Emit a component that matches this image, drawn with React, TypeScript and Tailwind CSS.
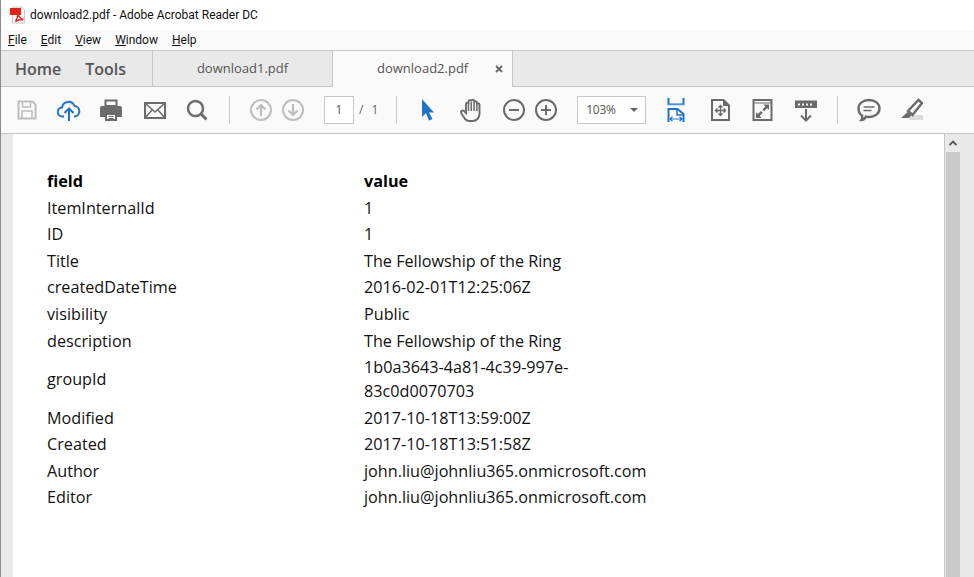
const rows: [string, string[]][] = [
  ['ItemInternalId', ['1']],
  ['ID', ['1']],
  ['Title', ['The Fellowship of the Ring']],
  ['createdDateTime', ['2016-02-01T12:25:06Z']],
  ['visibility', ['Public']],
  ['description', ['The Fellowship of the Ring']],
  ['groupId', ['1b0a3643-4a81-4c39-997e-', '83c0d0070703']],
  ['Modified', ['2017-10-18T13:59:00Z']],
  ['Created', ['2017-10-18T13:51:58Z']],
  ['Author', ['john.liu@johnliu365.onmicrosoft.com']],
  ['Editor', ['john.liu@johnliu365.onmicrosoft.com']],
];

const Sep = ({ className }: { className: string }) => <div className={`w-px h-[28px] bg-[#c8c8c8] shrink-0 ${className}`} />;

const Icon = ({ className, w = 24, children }: { className: string; w?: number; children: React.ReactNode }) => (
  <svg width={w} height="24" viewBox={`0 0 ${w} 24`} fill="none" className={`shrink-0 ${className}`}>
    {children}
  </svg>
);

const GRAY = '#6b6b6b';
const LIGHT = '#bdbdbd';
const BLUE = '#1f74c9';

export default function App() {
  return (
    <div className="w-[974px] h-[577px] overflow-hidden flex flex-col bg-white border-l border-[#8c8c8c] font-['Open_Sans','Noto_Sans',sans-serif] text-[#222]">
      <div className="h-[30px] flex items-center shrink-0 bg-white">
        <svg width="18" height="18" viewBox="0 0 18 18" className="ml-[8px] mt-[-1px]">
          <path d="M3.5 1h9l3 3v13h-12z" fill="#f4f4f4" stroke="#c9c9c9" />
          <path d="M1 2h11v7H1z" fill="#e2231a" />
          <path d="M9 8c1 3 3 5 5.5 5.5-2.5 0-6 .5-8 2 1-2 2.500-5 2.500-7.500z" fill="none" stroke="#e2231a" strokeWidth="1.300" />
        </svg>
        <span className="ml-[3px] text-[12px] font-['Roboto',sans-serif] text-[#111]">download2.pdf - Adobe Acrobat Reader DC</span>
      </div>
      <div className="h-[20px] shrink-0 flex items-center bg-[#fafafa] pl-[7px] gap-[14px] text-[12px] font-['Roboto',sans-serif] text-[#111]">
        <span><u>F</u>ile</span>
        <span><u>E</u>dit</span>
        <span><u>V</u>iew</span>
        <span><u>W</u>indow</span>
        <span><u>H</u>elp</span>
      </div>
      <div className="h-[37px] shrink-0 flex bg-[#e9e9e9] border-y border-[#c6c6c6] text-[#555]">
        <div className="w-[152px] flex items-center pl-[14px] gap-[24px] text-[16px] font-semibold border-r border-[#c6c6c6]">
          <span>Home</span>
          <span>Tools</span>
        </div>
        <div className="w-[180px] flex items-center justify-center text-[13px] border-r border-[#c6c6c6]">download1.pdf</div>
        <div className="w-[180px] h-[36px] flex items-center bg-[#fafafa] border-r border-[#c6c6c6] text-[13px]">
          <span className="ml-[44px]">download2.pdf</span>
          <svg width="8" height="8" viewBox="0 0 8 8" className="ml-[27px]">
            <path d="M1 1l6 6M7 1L1 7" stroke="#666" strokeWidth="1.800" />
          </svg>
        </div>
      </div>
      <div className="h-[47px] shrink-0 flex items-center bg-[#fafafa] border-b border-[#c6c6c6] text-[#555]">
        <Icon className="ml-[14px]">
          <path d="M3.500 3.500h14l3 3v14h-17z" stroke={LIGHT} strokeWidth="2" />
          <path d="M7.500 4v5h8V4M7 20v-7h10v7" stroke={LIGHT} strokeWidth="1.500" />
        </Icon>
        <Icon className="ml-[18px]">
          <path d="M7 18.500H5.500a4.500 4.500 0 0 1-.5-9 6.500 6.500 0 0 1 12.500-1.500 5.300 5.300 0 0 1 .5 10.500H17" stroke={BLUE} strokeWidth="2" />
          <path d="M12 23V11M7.500 15l4.500-4.500 4.500 4.500" stroke={BLUE} strokeWidth="2" />
        </Icon>
        <Icon className="ml-[18px]">
          <path d="M6.500 2.500h11V8h-11z" stroke={GRAY} strokeWidth="2" />
          <path d="M3 8h18a2 2 0 0 1 2 2v9h-5v-4H6v4H1v-9a2 2 0 0 1 2-2z" fill={GRAY} />
          <path d="M7 16h10v6H7z" fill="none" stroke={GRAY} strokeWidth="2" />
          <path d="M9.500 18.500h5M9.500 20.500h5" stroke={GRAY} />
        </Icon>
        <Icon className="ml-[20px]">
          <path d="M2 5h20v15H2z" stroke={GRAY} strokeWidth="2" />
          <path d="M2 5l10 9 10-9M2 20l7.500-8.500M22 20l-7.500-8.500" stroke={GRAY} strokeWidth="1.500" />
        </Icon>
        <Icon className="ml-[18px]">
          <circle cx="10.500" cy="10.500" r="7.500" stroke={GRAY} strokeWidth="2.400" />
          <path d="M15.500 15.500l6 6" stroke={GRAY} strokeWidth="3" />
        </Icon>
        <Sep className="ml-[20px]" />
        <Icon className="ml-[19px]">
          <circle cx="12" cy="12" r="10" stroke={LIGHT} strokeWidth="2" />
          <path d="M12 18V7M7.500 11.500L12 7l4.500 4.500" stroke={LIGHT} strokeWidth="2.200" />
        </Icon>
        <Icon className="ml-[8px]">
          <circle cx="12" cy="12" r="10" stroke={LIGHT} strokeWidth="2" />
          <path d="M12 6v11M7.500 12.500L12 17l4.500-4.500" stroke={LIGHT} strokeWidth="2.200" />
        </Icon>
        <div className="ml-[19px] w-[30px] h-[28px] bg-white border border-[#c8c8c8] flex items-center justify-center text-[12px]">1</div>
        <span className="ml-[5px] text-[12px] text-[#666]">/</span>
        <span className="ml-[8px] text-[12px] text-[#666]">1</span>
        <Sep className="ml-[18px]" />
        <Icon className="ml-[19px]">
          <path d="M6 1l12 13.500h-5l3.500 6.500-3.500 1.500-3-7.500L6 19z" fill={BLUE} />
        </Icon>
        <Icon className="ml-[20px]">
          <path d="M5 21c-1-2-4-5-4-7 0-1.500 1.500-2 3-1l2 2V6c0-1.800 2.500-1.800 2.500 0V3.500c0-1.800 2.800-1.800 2.800 0V3c0-1.800 2.800-1.800 2.800 0v1.500c0-1.800 2.800-1.800 2.800 0v2c0-1.500 2.600-1.500 2.600 0V16c0 4-3 7-7 7H9c-2 0-3-1-4-2z" stroke={GRAY} strokeWidth="1.900" />
          <path d="M8.500 6v7M11.300 4v9M14.100 4v9M16.900 6v7" stroke={GRAY} strokeWidth="1.500" />
        </Icon>
        <Icon className="ml-[18px]">
          <circle cx="12" cy="12" r="10" stroke={GRAY} strokeWidth="2" />
          <path d="M7 12h10" stroke={GRAY} strokeWidth="2" />
        </Icon>
        <Icon className="ml-[8px]">
          <circle cx="12" cy="12" r="10" stroke={GRAY} strokeWidth="2" />
          <path d="M7 12h10M12 7v10" stroke={GRAY} strokeWidth="2" />
        </Icon>
        <div className="ml-[19px] w-[69px] h-[28px] bg-white border border-[#c8c8c8] flex items-center justify-between pl-[8px] pr-[7px] text-[12px] tracking-[-0.3px]">
          <span>103%</span>
          <span className="w-0 h-0 border-x-[4px] border-x-transparent border-t-[4px] border-t-[#666]" />
        </div>
        <Icon w={20} className="ml-[20px]">
          <path d="M2.500 0v6.500h15V0" stroke={BLUE} strokeWidth="2" />
          <path d="M2 7.500h16" stroke="#cfe0f2" strokeWidth="1.500" />
          <path d="M2.500 24V11h9l6 5v8" stroke={BLUE} strokeWidth="2" />
          <path d="M11 11v6h7" stroke={BLUE} strokeWidth="1.500" />
          <path d="M4 21h12M6.500 18.800L4 21l2.500 2.200M13.500 18.800L16 21l-2.500 2.200" stroke={BLUE} strokeWidth="1.200" />
        </Icon>
        <Icon w={20} className="ml-[24px]">
          <path d="M2 2h11.500L19 7.500V22H2z" stroke={GRAY} strokeWidth="2" />
          <path d="M13 2v6h6" fill={GRAY} />
          <path d="M10.500 7.500v10M5.500 12.500h10M8.500 9.500l2-2 2 2M8.500 15.500l2 2 2-2M7.500 10.500l-2 2 2 2M13.500 10.500l2 2-2 2" stroke={GRAY} strokeWidth="1.400" />
        </Icon>
        <Icon w={21} className="ml-[22px]">
          <path d="M1.500 2h18v20h-18z" stroke={GRAY} strokeWidth="2" />
          <path d="M1.500 5h18" stroke={GRAY} strokeWidth="1" />
          <path d="M11.500 6.500H17V12l-1.800-1.800-3 3-1.800-1.800 3-3zM4 20v-6l1.900 1.900 3-3 1.800 1.800-3 3L9.500 20z" fill={GRAY} />
        </Icon>
        <Icon className="ml-[21px]">
          <path d="M1 2.500h22V10H1z" fill={GRAY} />
          <path d="M4 5.500h2v2H4zM8 5.500h2v2H8zM12 5.500h2v2h-2zM16 5.500h2v2h-2z" fill="#fff" />
          <path d="M12 11v11.500M7 17.500l5 5 5-5" stroke={GRAY} strokeWidth="2" />
        </Icon>
        <Sep className="ml-[19px]" />
        <Icon className="ml-[19px]">
          <path d="M12 2c6 0 10.500 3.500 10.500 8.500S18 19 12 19c-1.200 0-2 0-3-.3C8 20.500 6.500 22 4.500 22c1-1.200 1-3 .5-4.500C2.500 16 1.500 13.500 1.500 10.500 1.500 5.500 6 2 12 2z" stroke={GRAY} strokeWidth="2.400" />
          <path d="M6.500 9h11M6.500 12.500h8" stroke={GRAY} strokeWidth="1.300" />
        </Icon>
        <Icon className="ml-[18px]">
          <path d="M9 22h15v-5H14z" fill="#dcdcdc" />
          <path d="M19.500 2l3.500 3-9.500 12-4.500-4z" stroke={GRAY} strokeWidth="2.400" fill="#fafafa" />
          <path d="M8.500 14l4 3.500-2.500 2.500H2z" fill={GRAY} />
        </Icon>
      </div>
      <div className="flex-1 flex min-h-0 bg-[#e9e9e9]">
        <div className="w-[12px] shrink-0" />
        <div className="w-[931px] bg-white pl-[34px] pt-[34px] font-['Open_Sans',sans-serif] text-[16.2px] leading-[24px] text-[#111]">
          <div className="grid grid-cols-[317px_1fr] font-bold h-[26.6px] items-center text-black">
            <span>field</span>
            <span>value</span>
          </div>
          {rows.map(([k, v]) => (
            <div key={k} className="grid grid-cols-[317px_1fr] items-center py-[1.270px]">
              <span>{k}</span>
              <span>
                {v.map((line) => (
                  <div key={line}>{line}</div>
                ))}
              </span>
            </div>
          ))}
        </div>
        <div className="w-[1px] bg-[#c6c6c6] shrink-0" />
        <div className="flex-1 flex flex-col px-[1px]">
          <div className="h-[18px] flex items-center justify-center">
            <svg width="8" height="6" viewBox="0 0 8 6"><path d="M0.500 5L4 1.500 7.500 5" fill="none" stroke="#555" strokeWidth="1.800" /></svg>
          </div>
          <div className="flex-1 bg-[#c8c8c8]" />
        </div>
        <div className="w-[13px] shrink-0" />
      </div>
    </div>
  );
}
